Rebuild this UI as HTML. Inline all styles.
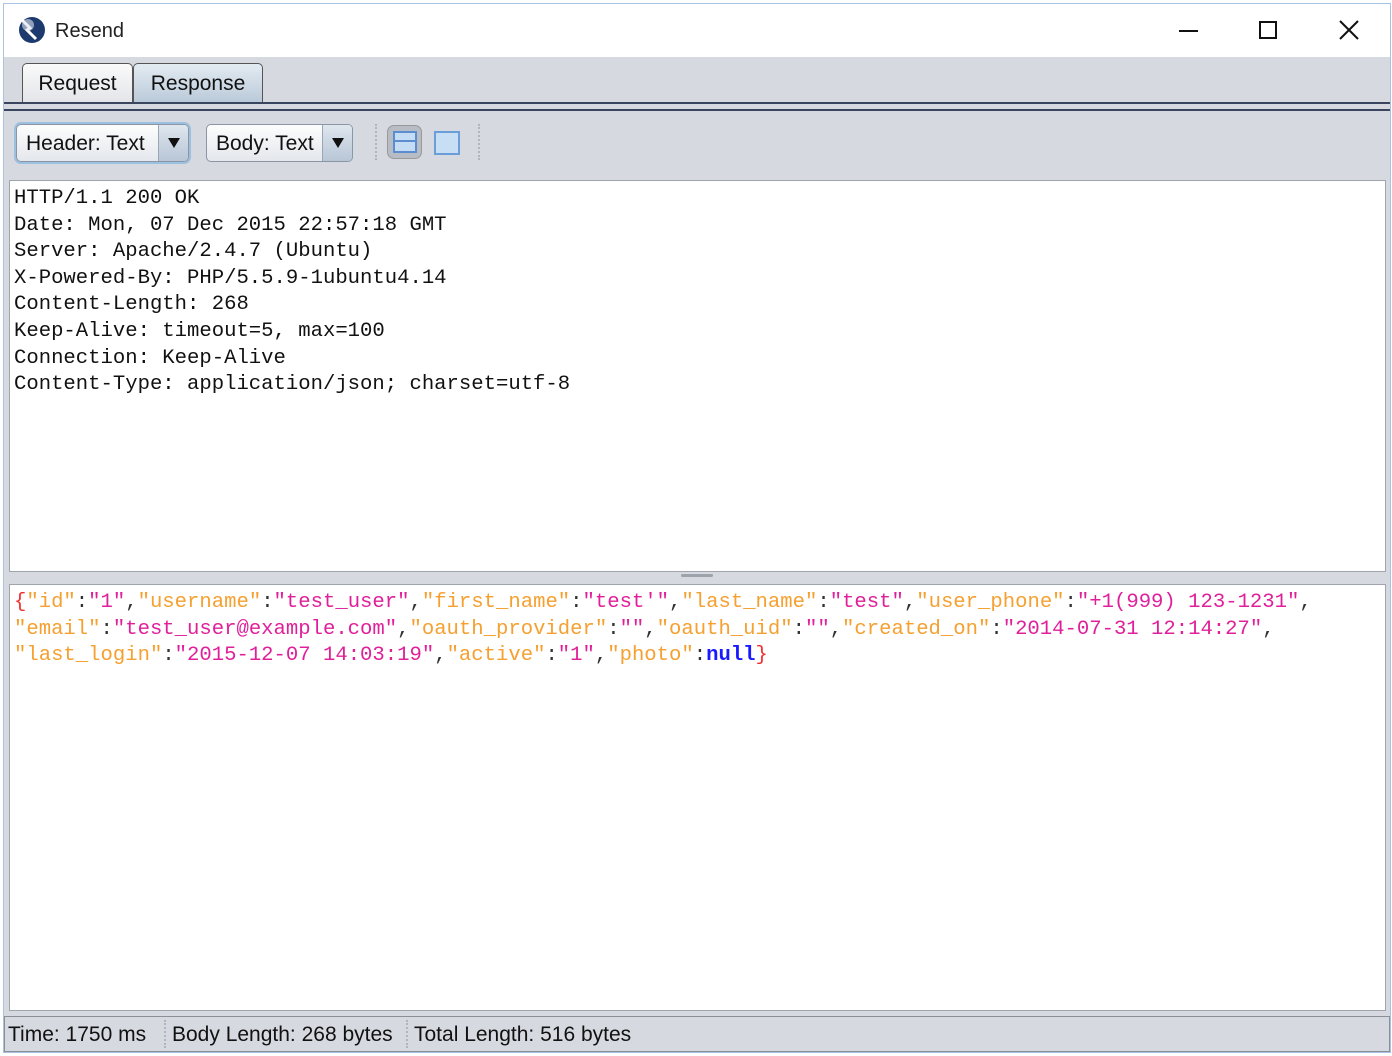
<!DOCTYPE html>
<html><head><meta charset="utf-8"><style>
*{margin:0;padding:0;box-sizing:border-box}
body{width:1392px;height:1056px;background:#fff;position:relative;overflow:hidden;font-family:"Liberation Sans",sans-serif}
.abs{position:absolute}
.win{left:3px;top:3px;width:1388px;height:1050px;border:1px solid #a9c2e0;background:#d6d9e0}
.title{left:4px;top:4px;width:1386px;height:53px;background:#fff}
.mono{font-family:"Liberation Mono",monospace;font-size:20.6px;line-height:26.6px;white-space:pre}
.k{color:#f5a030}.s{color:#e0209a}.p{color:#333}.b{color:#f03030}.n{color:#1a1aff;font-weight:bold}
.tab{top:63px;height:41px;border:1px solid #555;border-bottom:none;border-radius:5px 5px 0 0;font-size:21px;padding-top:8px;text-align:center;color:#111}
.dd{top:124px;height:38px;border:1px solid #8a96a6;border-radius:5px;background:linear-gradient(#fdfdfd,#e4e7ec);font-size:21px;padding:7px 0 0 9px;color:#111}
.arr{position:absolute;right:0;top:0;width:30px;height:36px;border-left:1px solid #9aa6b6;background:linear-gradient(#dfe6ee,#b8c6d6);border-radius:0 4px 4px 0}
.arr:after{content:"";position:absolute;left:9px;top:13px;border-left:6px solid transparent;border-right:6px solid transparent;border-top:10px solid #111}
</style></head><body>
<div class="abs win"></div>
<div class="abs title"></div>
<svg class="abs" style="left:16px;top:14px" width="32" height="32" viewBox="0 0 32 32"><circle cx="16" cy="16" r="13" fill="#1d3a6e"/><path d="M6 6 L14 14 L11 16 L20 25" stroke="#fff" stroke-width="3" fill="none"/><circle cx="12" cy="11" r="6" fill="#dfe6f0" opacity=".6"/></svg>
<div class="abs" style="left:55px;top:20px;font-size:20px;color:#222">Resend</div>
<div class="abs" style="left:1179px;top:30px;width:19px;height:2px;background:#111"></div>
<div class="abs" style="left:1259px;top:21px;width:18px;height:18px;border:2px solid #111"></div>
<svg class="abs" style="left:1339px;top:20px" width="20" height="20"><path d="M1 1L19 19M19 1L1 19" stroke="#111" stroke-width="2"/></svg>

<div class="abs tab" style="left:22px;width:111px;background:linear-gradient(#fafafa,#e2e4e8)">Request</div>
<div class="abs tab" style="left:133px;width:130px;background:linear-gradient(#e4ebf2,#b8c8d8)">Response</div>
<div class="abs" style="left:4px;top:102px;width:1386px;height:2px;background:#3a4660"></div>
<div class="abs" style="left:4px;top:109px;width:1386px;height:2px;background:#3a4660"></div>

<div class="abs dd" style="left:16px;width:173px;box-shadow:0 0 0 2px #9cc0e0">Header: Text<div class="arr"></div></div>
<div class="abs dd" style="left:206px;width:147px">Body: Text<div class="arr"></div></div>
<div class="abs" style="left:375px;top:124px;height:36px;border-left:2px dotted #b0b4bc"></div>
<div class="abs" style="left:478px;top:124px;height:36px;border-left:2px dotted #b0b4bc"></div>
<div class="abs" style="left:387px;top:125px;width:35px;height:34px;border-radius:7px;background:#b8bcc4;border:1px solid #999"></div>
<div class="abs" style="left:393px;top:131px;width:24px;height:22px;border:2px solid #5a8ed0;background:#c4dcf4"><div style="margin-top:7px;height:2px;background:#5a8ed0"></div></div>
<div class="abs" style="left:434px;top:131px;width:26px;height:24px;border:2px solid #6a9ed8;background:#c8def4"></div>

<div class="abs" style="left:9px;top:180px;width:1377px;height:392px;background:#fff;border:1px solid #a0a4ac"></div>
<div class="abs mono" style="left:14px;top:186px;color:#111">HTTP/1.1 200 OK
Date: Mon, 07 Dec 2015 22:57:18 GMT
Server: Apache/2.4.7 (Ubuntu)
X-Powered-By: PHP/5.5.9-1ubuntu4.14
Content-Length: 268
Keep-Alive: timeout=5, max=100
Connection: Keep-Alive
Content-Type: application/json; charset=utf-8</div>
<div class="abs" style="left:681px;top:574px;width:32px;height:3px;border-radius:2px;background:#9ea2aa"></div>
<div class="abs" style="left:9px;top:584px;width:1377px;height:427px;background:#fff;border:1px solid #a0a4ac"></div>
<div class="abs mono" style="left:14px;top:590px"><span class="b">{</span><span class="k">"id"</span><span class="p">:</span><span class="s">"1"</span><span class="p">,</span><span class="k">"username"</span><span class="p">:</span><span class="s">"test_user"</span><span class="p">,</span><span class="k">"first_name"</span><span class="p">:</span><span class="s">"test'"</span><span class="p">,</span><span class="k">"last_name"</span><span class="p">:</span><span class="s">"test"</span><span class="p">,</span><span class="k">"user_phone"</span><span class="p">:</span><span class="s">"+1(999) 123-1231"</span><span class="p">,</span>
<span class="k">"email"</span><span class="p">:</span><span class="s">"test_user@example.com"</span><span class="p">,</span><span class="k">"oauth_provider"</span><span class="p">:</span><span class="s">""</span><span class="p">,</span><span class="k">"oauth_uid"</span><span class="p">:</span><span class="s">""</span><span class="p">,</span><span class="k">"created_on"</span><span class="p">:</span><span class="s">"2014-07-31 12:14:27"</span><span class="p">,</span>
<span class="k">"last_login"</span><span class="p">:</span><span class="s">"2015-12-07 14:03:19"</span><span class="p">,</span><span class="k">"active"</span><span class="p">:</span><span class="s">"1"</span><span class="p">,</span><span class="k">"photo"</span><span class="p">:</span><span class="n">null</span><span class="b">}</span></div>

<div class="abs" style="left:4px;top:1016px;width:1386px;height:36px;border:1px solid #8a8e96;background:#d6d9e0"></div>
<div class="abs" style="left:8px;top:1023px;font-size:21px;color:#111;white-space:pre">Time: 1750 ms</div>
<div class="abs" style="left:164px;top:1020px;height:28px;border-left:2px dotted #b0b4bc"></div>
<div class="abs" style="left:172px;top:1023px;font-size:21px;color:#111">Body Length: 268 bytes</div>
<div class="abs" style="left:406px;top:1020px;height:28px;border-left:2px dotted #b0b4bc"></div>
<div class="abs" style="left:414px;top:1023px;font-size:21px;color:#111">Total Length: 516 bytes</div>
</body></html>
